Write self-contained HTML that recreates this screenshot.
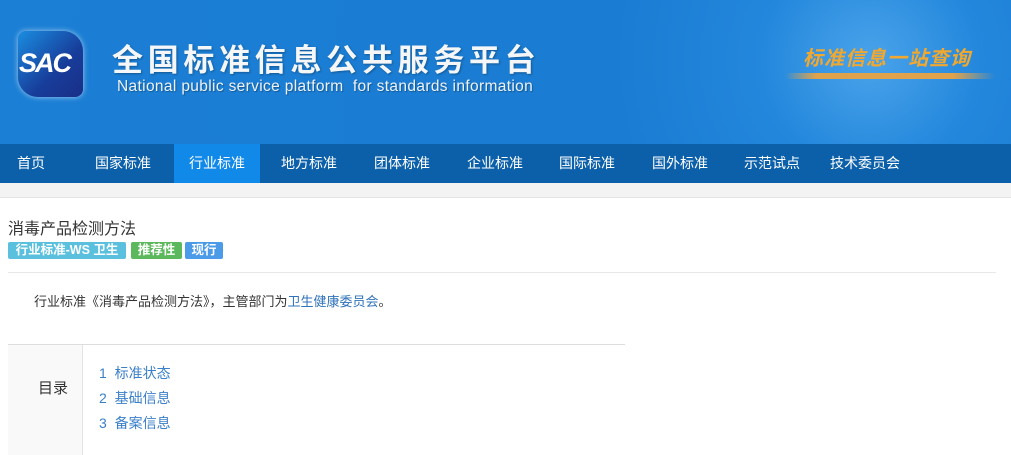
<!DOCTYPE html>
<html><head><meta charset="utf-8"><style>
body{margin:0;width:1011px;height:449px;overflow:hidden;background:#fff;font-family:"Liberation Sans","Noto Sans CJK SC",sans-serif;}
.hd{position:absolute;left:0;top:0;width:1011px;height:144px;background:radial-gradient(circle at 870px 60px,#4aa3ea 0,#2387dc 110px,#1a7cd2 260px,#1b7fd5 100%);overflow:hidden}
.logo{position:absolute;left:18px;top:31px;width:65px;height:66px;border-radius:8px 20px 8px 20px;background:linear-gradient(135deg,#1a8de0,#173d9a 60%,#1a2f88);box-shadow:0 0 6px rgba(255,255,255,.6)}
.logo span{position:absolute;left:1px;top:17px;color:#fff;font:italic bold 27px "Liberation Sans",sans-serif;letter-spacing:-2px}
.t1{position:absolute;left:112px;top:35px;color:#f4f6f8;font-size:31px;letter-spacing:4.7px;font-weight:bold;text-shadow:1px 1px 2px rgba(0,0,0,.3)}
.t2{position:absolute;left:117px;top:78px;color:#eef2f6;font-size:15.5px;letter-spacing:.35px;text-shadow:1px 1px 1px rgba(0,0,0,.3)}
.slogan{position:absolute;left:803px;top:42px;color:#f0a830;font-size:20px;font-style:italic;font-weight:bold;letter-spacing:1px}
.bar{position:absolute;left:785px;top:73px;width:210px;height:6px;background:linear-gradient(90deg,rgba(230,170,70,0),#e0a24a 15%,#e0a24a 80%,rgba(230,170,70,0));border-radius:3px}
.nav{position:absolute;left:0;top:144px;width:1011px;height:39px;background:#0c60a9}
.nav a{position:absolute;top:0;height:39px;line-height:39px;color:#fff;font-size:14px;text-decoration:none}
.nav .act{background:#1189e8;left:174px;width:86px;text-align:center}
.strip{position:absolute;left:0;top:183px;width:1011px;height:14px;background:#f3f3f3;border-bottom:1px solid #e3e3e3}
.title{position:absolute;left:8px;top:215px;font-size:16px;color:#333}
.bd{position:absolute;top:242px;height:17px;line-height:17px;color:#fff;font-size:12.5px;border-radius:2px;font-weight:bold;text-align:center}
.sep{position:absolute;left:8px;top:272px;width:988px;border-top:1px solid #e8e8e8}
.p{position:absolute;left:34px;top:291px;font-size:13px;color:#333}
.p a{color:#2f73b8}
.toc{position:absolute;left:8px;top:344px;width:617px;height:110px;border-top:1px solid #ddd}
.tl{position:absolute;left:0;top:0;width:74px;height:110px;background:#f9f9f9;border-right:1px solid #e3e3e3}
.tl span{position:absolute;left:30px;top:32px;font-size:15px;color:#333}
.ti{position:absolute;left:91px;font-size:14px;color:#3a7fc9}
</style></head><body>
<div class="hd">
<div class="logo"><span>SAC</span></div>
<div class="t1">全国标准信息公共服务平台</div>
<div class="t2">National public service platform&nbsp; for standards information</div>
<div class="slogan">标准信息一站查询</div>
<div class="bar"></div>
</div>
<div class="nav">
<a style="left:17px">首页</a>
<a style="left:95px">国家标准</a>
<a class="act">行业标准</a>
<a style="left:281px">地方标准</a>
<a style="left:374px">团体标准</a>
<a style="left:467px">企业标准</a>
<a style="left:559px">国际标准</a>
<a style="left:652px">国外标准</a>
<a style="left:744px">示范试点</a>
<a style="left:830px">技术委员会</a>
</div>
<div class="strip"></div>
<div class="title">消毒产品检测方法</div>
<div class="bd" style="left:8px;width:118px;background:#5bc0de">行业标准-WS 卫生</div>
<div class="bd" style="left:131px;width:51px;background:#5cb85c">推荐性</div>
<div class="bd" style="left:185px;width:38px;background:#4c9be8">现行</div>
<div class="sep"></div>
<div class="p">行业标准《消毒产品检测方法》，主管部门为<a>卫生健康委员会</a>。</div>
<div class="toc"><div class="tl"><span>目录</span></div>
<div class="ti" style="top:18px">1&nbsp; 标准状态</div>
<div class="ti" style="top:43px">2&nbsp; 基础信息</div>
<div class="ti" style="top:68px">3&nbsp; 备案信息</div>
</div>
</body></html>
